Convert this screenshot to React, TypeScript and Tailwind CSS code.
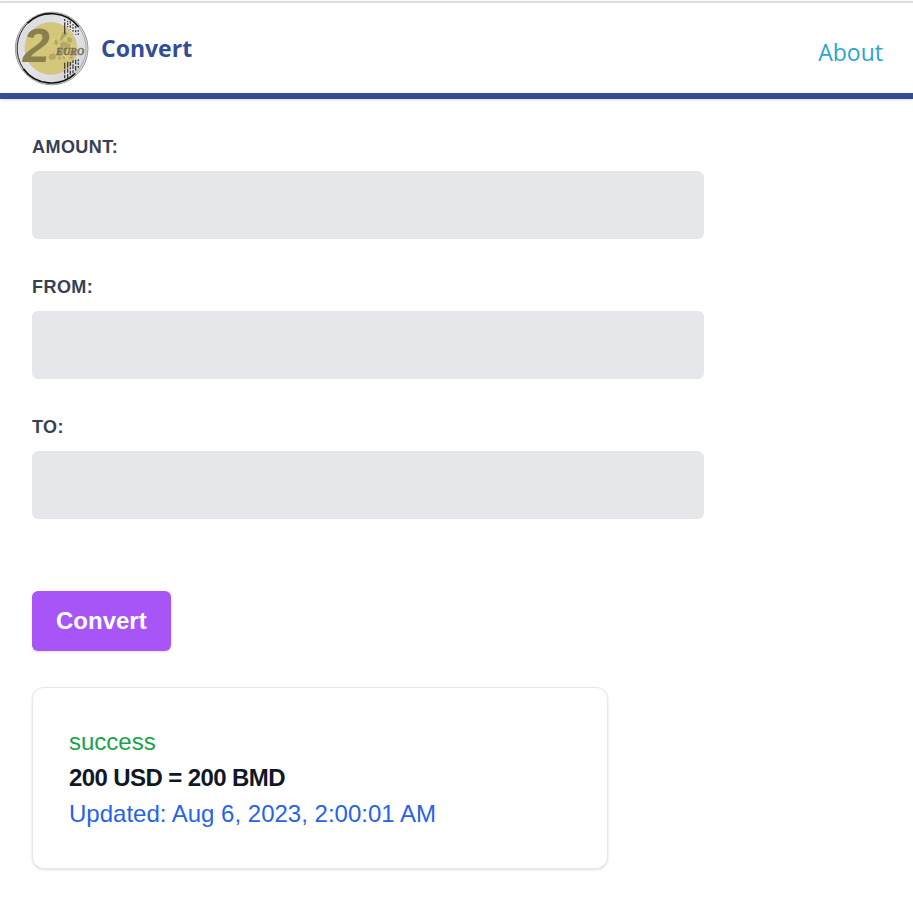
import React from 'react';

function CoinLogo() {
  return (
    <svg className="h-[75px] w-[75px] shrink-0" viewBox="42 33 225 225" role="img" aria-label="Two euro coin">
      <defs>
        <linearGradient id="rim" x1="0" y1="0" x2="1" y2="1">
          <stop offset="0" stopColor="#d8d8da" />
          <stop offset="0.5" stopColor="#e5e5e9" />
          <stop offset="1" stopColor="#d2d2d5" />
        </linearGradient>
      </defs>
      <circle cx="155" cy="145.500" r="109" fill="#dcdcdc" stroke="#9a9a9a" strokeWidth="3" />
      <circle cx="154.500" cy="145" r="103" fill="url(#rim)" />
      <path d="M82 70A104 104 0 0 1 236 81M70 206A104 104 0 0 0 226 220" fill="none" stroke="#111" strokeWidth="5" />
      <path d="M82 70A108 108 0 0 0 70 206" fill="none" stroke="#222" strokeWidth="3" />
      <path d="M236 81A103 103 0 0 1 226 220" fill="none" stroke="#aaa" strokeWidth="3" />
      <circle cx="153" cy="145.500" r="78" fill="#d4c77c" stroke="#c5c1a2" strokeWidth="2" />
      <g fill="#b4a866">
        <path d="M187 99l7-5 9 5-3 9-8 3-5 10-7 2 1-12zM204 111l9 2 4 8-5 8-9-4-2-7zM164 120l7-1 4 9-5 8-7-4zM180 130l11-6 12 4 10 7-4 12-10 3-4 13-9-4-7 5-10-2 3-14 9-6zM150 162l12-2 7 7-4 11-12 2-8-7zM173 169l7 1 4 8-7 2zM186 166l9 5 2 7-8-2zM203 153l12-3 7 9-7 8-12-4zM207 171l10-2 3 5-9 3z" />
      </g>
      <path d="M156 125l6-8M174 113l8-10M190 161l12 17M178 153l17-12M211 134l9 13" stroke="#eee0a0" strokeWidth="2" />
      <g fill="none" stroke="#45453f" strokeWidth="4">
        <path d="M194 57V104" strokeDasharray="6 4 36 2" />
        <path d="M203 62V82" strokeDasharray="5 3" />
        <path d="M211 64V90" strokeDasharray="7 5" />
        <path d="M219 72V100" strokeDasharray="5 4" />
        <path d="M227 78V104" strokeDasharray="7 5" />
        <path d="M235 90V110" strokeDasharray="5 5" />
        <path d="M194 188V235M203 185V235" strokeDasharray="18 3 12 4" />
        <path d="M211 186V230" strokeDasharray="12 4 6 4" />
        <path d="M219 181V225" strokeDasharray="8 4 14 4" />
        <path d="M227 179V217" strokeDasharray="14 5" />
        <path d="M235 178V206" strokeDasharray="6 4" />
      </g>
      <text x="68" y="186" fill="#89804b" fontFamily="Liberation Sans, sans-serif" fontStyle="italic" fontWeight="700" fontSize="146">2</text>
      <text x="169" y="165" fill="#777055" stroke="#777055" strokeWidth="1" fontFamily="Liberation Serif, serif" fontStyle="italic" fontSize="30">EURO</text>
    </svg>
  );
}

function Field({ id, label }: { id: string; label: string }) {
  return (
    <div className="mb-9">
      <label htmlFor={id} className="mb-3 block text-lg leading-6 font-bold tracking-wide text-gray-700 uppercase">
        {label}
      </label>
      <input
        id={id}
        type="text"
        className="block h-[68px] w-full rounded-md bg-gray-200 px-6 text-2xl text-gray-700 outline-none"
      />
    </div>
  );
}

export default function App() {
  return (
    <div className="bg-white pt-px font-['Liberation_Sans',Arial,sans-serif]">
      <header className="flex items-center justify-between border-t-2 border-b-6 border-t-[#dcdddd] border-b-[#304e96] px-3.5 pt-2 pb-[7px] font-['Open_Sans','Noto_Sans',sans-serif] text-[23px] leading-8 shadow-sm">
        <a href="#home" className="flex items-center gap-3 font-bold text-[#304e96]">
          <CoinLogo />
          <span className="pb-0.5">Convert</span>
        </a>
        <nav className="pt-1.5 pr-4">
          <a href="#about" className="text-[#2aa5cf]">About</a>
        </nav>
      </header>
      <main className="px-8 pt-9 pb-7">
        <form onSubmit={(event) => event.preventDefault()}>
          <div className="max-w-2xl">
            <Field id="amount" label="Amount:" />
            <Field id="from" label="From:" />
            <Field id="to" label="To:" />
          </div>
          <button type="submit" className="mt-[72px] block rounded-md bg-[#a855f7] px-6 py-3 text-2xl leading-9 font-bold text-white shadow-sm">
            Convert
          </button>
        </form>
        <section className="mt-9 max-w-xl rounded-xl border border-gray-200 bg-white p-9 text-2xl leading-9 shadow-sm">
          <p className="text-[#16a34a]">success</p>
          <p className="font-bold tracking-tight text-gray-900">200 USD = 200 BMD</p>
          <p className="text-[#2563eb]">Updated: Aug 6, 2023, 2:00:01 AM</p>
        </section>
      </main>
    </div>
  );
}
